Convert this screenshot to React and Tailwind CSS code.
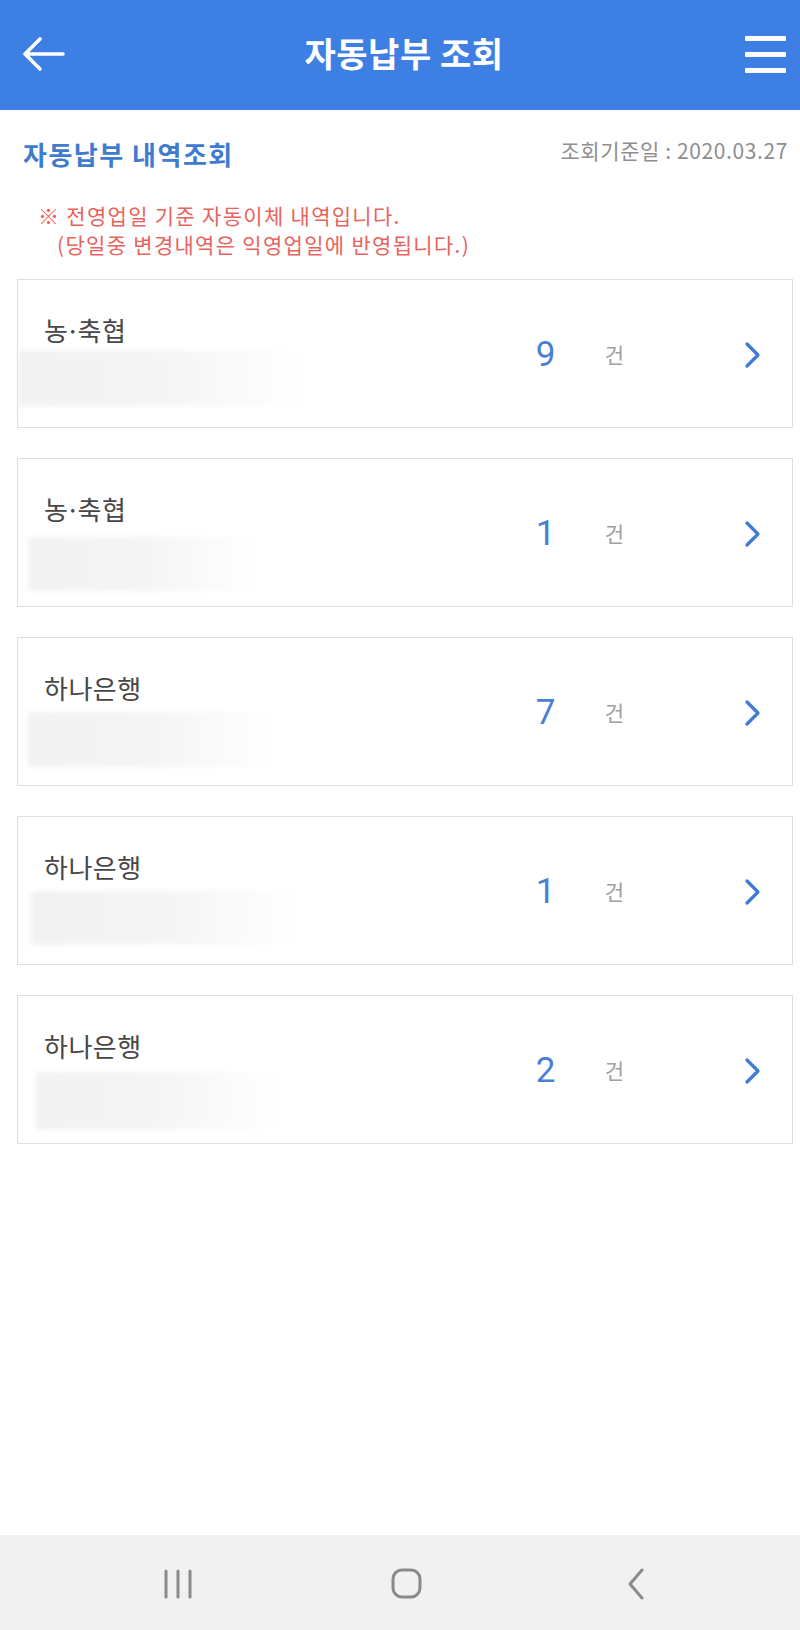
import React from "react";

const cards = [
  { name: ["농", "·", "축협"], count: 9, blur: { ml: "-ml-[26px]", w: "w-[290px]", mt: "mt-[4px]", h: "h-[56px]" } },
  { name: ["농", "·", "축협"], count: 1, blur: { ml: "-ml-[15px]", w: "w-[232px]", mt: "mt-[12px]", h: "h-[54px]" } },
  { name: ["하나은행"], count: 7, blur: { ml: "-ml-[16px]", w: "w-[250px]", mt: "mt-[8px]", h: "h-[55px]" } },
  { name: ["하나은행"], count: 1, blur: { ml: "-ml-[13px]", w: "w-[272px]", mt: "mt-[8px]", h: "h-[54px]" } },
  { name: ["하나은행"], count: 2, blur: { ml: "-ml-[8px]", w: "w-[245px]", mt: "mt-[10px]", h: "h-[58px]" } },
];

function Card({ c }) {
  return (
    <div className="h-[149px] border-[1.5px] border-[#dedede] bg-white flex items-stretch">
      <div className="flex-1 flex flex-col pl-[26px] pt-[34px]">
        <div className="text-[26px] leading-[32px] tracking-[0.5px] text-[#474747]">
          {c.name.length === 3 ? (
            <>
              {c.name[0]}
              <span className="-mx-[3px]">{c.name[1]}</span>
              {c.name[2]}
            </>
          ) : (
            c.name[0]
          )}
        </div>
        <div
          className={`${c.blur.ml} ${c.blur.w} ${c.blur.mt} ${c.blur.h} bg-gradient-to-r from-[#f2f2f2] via-[#f5f5f5] to-white blur-[2px]`}
        />
      </div>
      <div className="flex items-center pr-[31px] pt-[2px]">
        <div
          className="w-[40px] text-center text-[35px] leading-none text-[#4a7fd2]"
          style={{ fontFamily: "Roboto, 'Noto Sans CJK KR', sans-serif" }}
        >
          {c.count}
        </div>
        <div className="ml-[39px] text-[21px] text-[#a0a0a0] leading-none">건</div>
        <svg className="ml-[120px]" width="17" height="28" viewBox="0 0 17 28" fill="none">
          <path d="M3 3 L14 14 L3 25" stroke="#3f7bd6" strokeWidth="3.2" strokeLinecap="round" strokeLinejoin="round" />
        </svg>
      </div>
    </div>
  );
}

export default function App() {
  return (
    <div
      className="w-[800px] min-h-[1630px] bg-white flex flex-col"
      style={{ fontFamily: "'Noto Sans CJK KR', 'Noto Sans', sans-serif" }}
    >
      <header className="h-[110px] bg-[#3d7fe3] flex items-center justify-between px-[23px] relative">
        <svg width="42" height="34" viewBox="0 0 42 34" fill="none" className="-mt-[2px]">
          <path d="M40 17 H3 M17 2 L2 17 L17 32" stroke="white" strokeWidth="3.6" strokeLinecap="round" strokeLinejoin="round" />
        </svg>
        <div className="absolute left-0 right-0 text-center text-white font-bold text-[34px] leading-none tracking-[0.5px] pointer-events-none -mt-[5px] pl-[8px]">
          자동납부 조회
        </div>
        <div className="flex flex-col gap-[11px] -mr-[9px] -mt-[2px]">
          <div className="w-[41px] h-[5px] bg-white rounded-[1px]" />
          <div className="w-[41px] h-[5px] bg-white rounded-[1px]" />
          <div className="w-[41px] h-[5px] bg-white rounded-[1px]" />
        </div>
      </header>

      <main className="px-[17px]">
        <div className="mt-[26px] h-[36px] flex items-center justify-between pl-[6px] -mr-[5px]">
          <div className="text-[26px] font-bold tracking-[1.5px] text-[#3f7bcf] leading-none">자동납부 내역조회</div>
          <div className="text-[21px] tracking-[0.6px] text-[#8e8e8e] leading-none -mt-[7px]">조회기준일 : 2020.03.27</div>
        </div>

        <div className="mt-[29px] pl-[21px] text-[21px] leading-[29px] tracking-[1.3px] text-[#e8635b]">
          <div>※ 전영업일 기준 자동이체 내역입니다.</div>
          <div className="pl-[19px]">(당일중 변경내역은 익영업일에 반영됩니다.)</div>
        </div>

        <div className="mt-[20px] flex flex-col gap-[30px] w-[776px]">
          {cards.map((c, i) => (
            <Card key={i} c={c} />
          ))}
        </div>
      </main>

      <nav className="mt-auto h-[95px] bg-[#f1f1f1] flex items-center">
        <div className="w-full flex items-center pl-[163px] pt-[2px]">
          <svg width="30" height="30" viewBox="0 0 30 30" fill="none">
            <path d="M3 2 V28 M15 2 V28 M27 2 V28" stroke="#8a8a8a" strokeWidth="3" strokeLinecap="round" />
          </svg>
          <svg className="ml-[198px]" width="31" height="31" viewBox="0 0 31 31" fill="none">
            <rect x="2" y="2" width="27" height="27" rx="9" stroke="#8a8a8a" strokeWidth="3" />
          </svg>
          <svg className="ml-[205px]" width="18" height="32" viewBox="0 0 18 32" fill="none">
            <path d="M15 2 L3 16 L15 30" stroke="#8a8a8a" strokeWidth="3" strokeLinecap="round" strokeLinejoin="round" />
          </svg>
        </div>
      </nav>
    </div>
  );
}
